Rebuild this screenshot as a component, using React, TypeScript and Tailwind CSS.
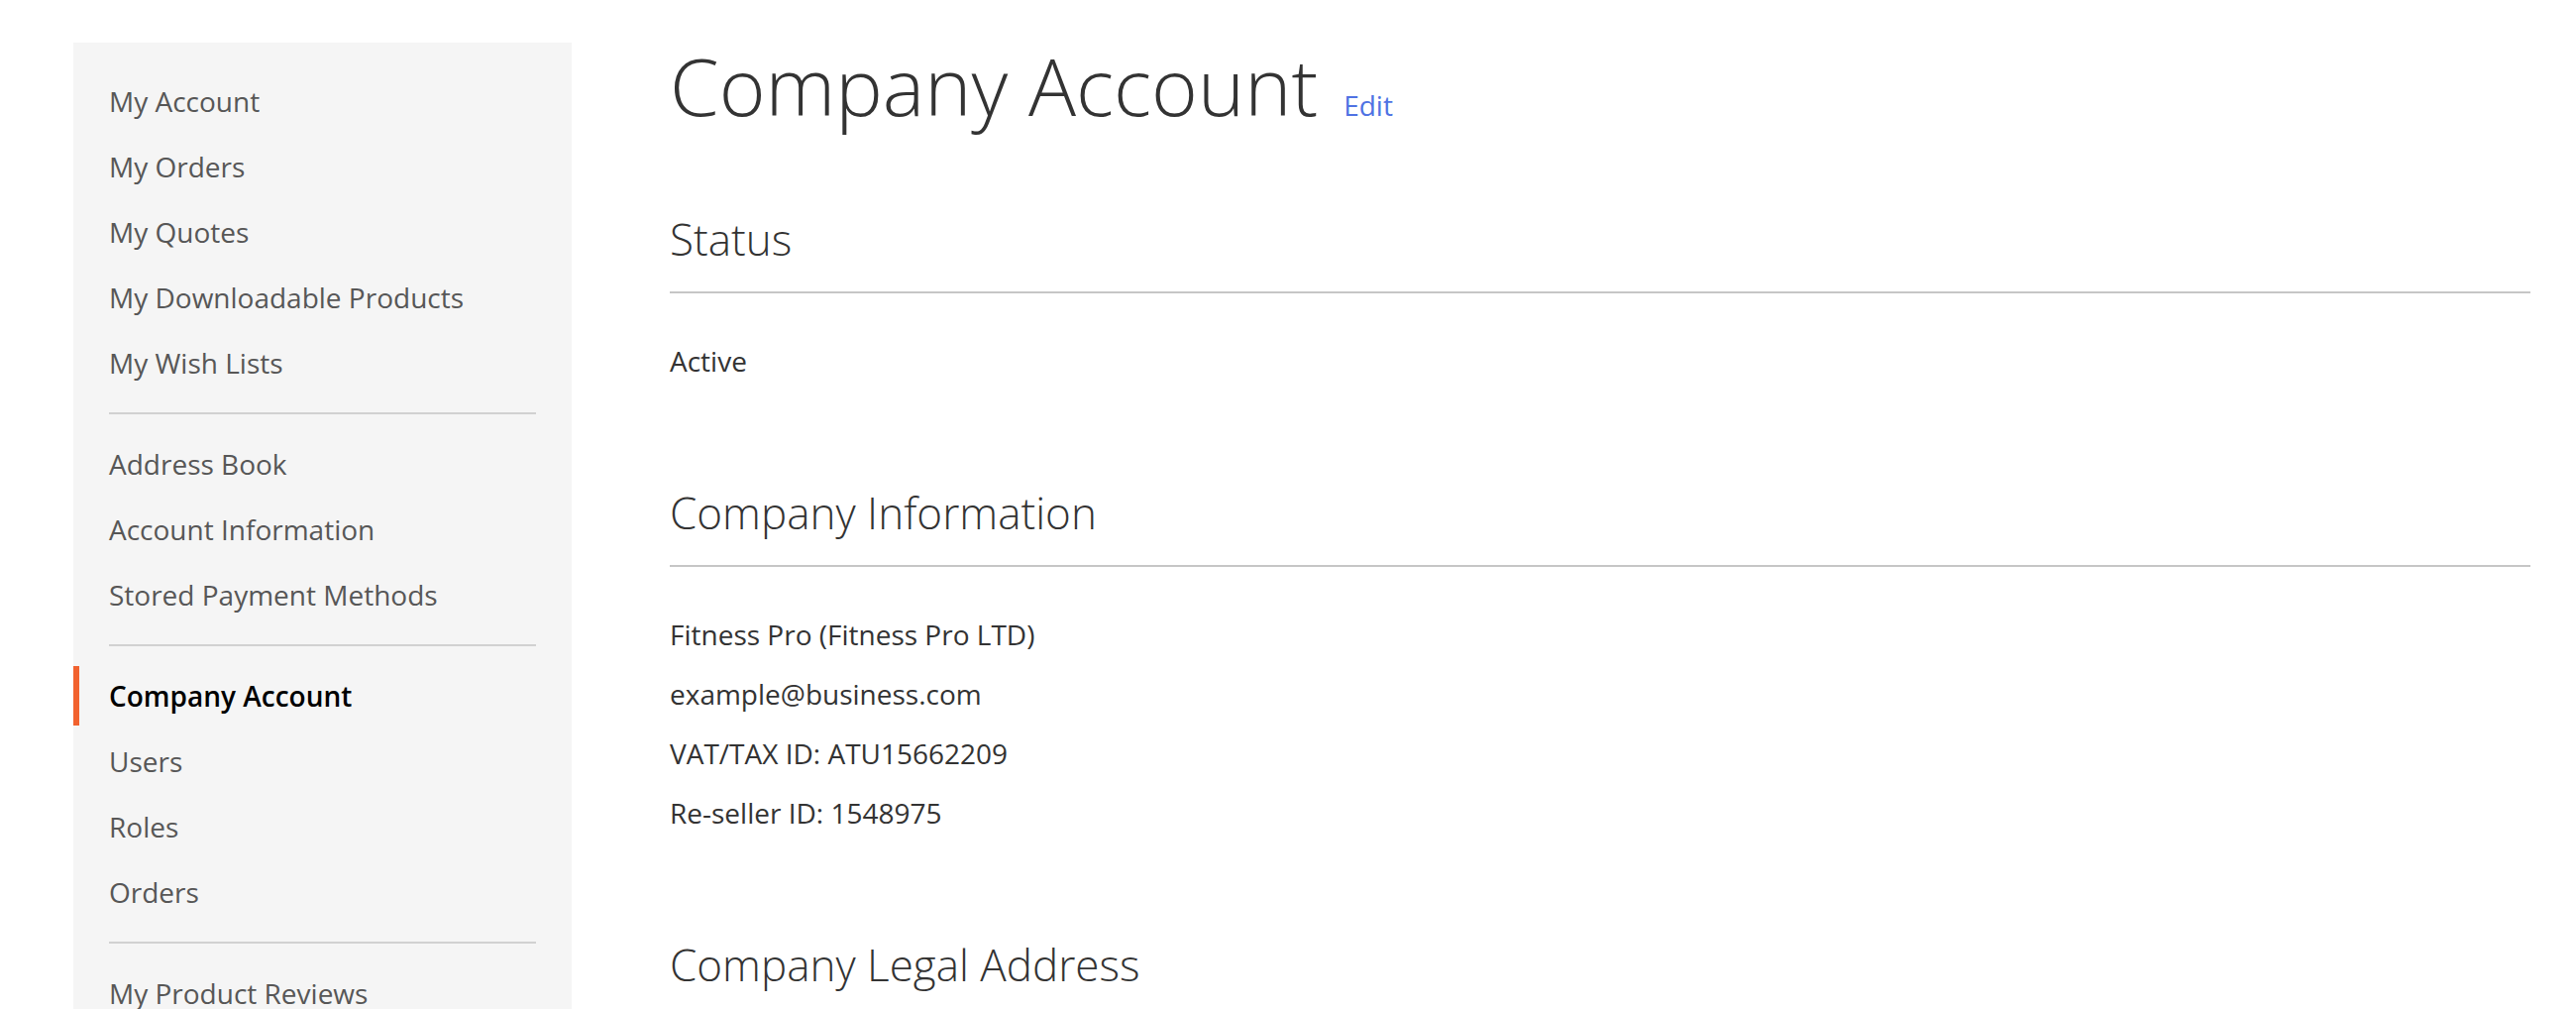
import React from "react";

type NavEntry = { label: string; current?: boolean } | "delim";

const nav: NavEntry[] = [
  { label: "My Account" },
  { label: "My Orders" },
  { label: "My Quotes" },
  { label: "My Downloadable Products" },
  { label: "My Wish Lists" },
  "delim",
  { label: "Address Book" },
  { label: "Account Information" },
  { label: "Stored Payment Methods" },
  "delim",
  { label: "Company Account", current: true },
  { label: "Users" },
  { label: "Roles" },
  { label: "Orders" },
  "delim",
  { label: "My Product Reviews" },
  { label: "Newsletter Subscriptions" },
];

function Sidebar() {
  return (
    <div className="w-[503px] shrink-0 bg-[#f5f5f5] pt-[23px] pb-[30px] self-start">
      <ul className="flex flex-col">
        {nav.map((n, i) =>
          n === "delim" ? (
            <li key={i} className="mt-[20px] mb-[14px] mx-[36px] border-t-2 border-[#d1d1d1]" />
          ) : (
            <li key={i} className="mt-[6px]">
              {n.current ? (
                <strong className="block border-l-[6px] border-[#f1622f] pl-[30px] pr-[36px] py-[10px] text-[28px] leading-[40px] font-semibold text-black">
                  {n.label}
                </strong>
              ) : (
                <a
                  href="#"
                  className="block border-l-[6px] border-transparent pl-[30px] pr-[36px] py-[10px] text-[28px] leading-[40px] text-[#575757]"
                >
                  {n.label}
                </a>
              )}
            </li>
          )
        )}
      </ul>
    </div>
  );
}

function Section({ title, lines }: { title: string; lines: string[] }) {
  return (
    <div className="mb-[107px]">
      <h2 className="border-b-2 border-[#c6c6c6] pb-[27px] text-[44px] leading-[52px] font-light text-[#333]">
        {title}
      </h2>
      <div className="mt-[48px] flex flex-col gap-[20px]">
        {lines.map((l) => (
          <div key={l} className="text-[28px] leading-[40px] text-[#333]">
            {l}
          </div>
        ))}
      </div>
    </div>
  );
}

export default function App() {
  return (
    <div
      className="min-h-screen bg-white flex pl-[74px] pr-[46px] pt-[43px]"
      style={{ fontFamily: '"Open Sans", "Liberation Sans", sans-serif' }}
    >
      <Sidebar />
      <main className="flex-1 ml-[99px] -mt-px">
        <div className="flex items-baseline mb-[85px]">
          <h1 className="text-[80px] leading-[88px] font-light text-[#333]">Company Account</h1>
          <a href="#" className="ml-[26px] text-[28px] leading-[40px] text-[#4f72e3]">
            Edit
          </a>
        </div>
        <Section title="Status" lines={["Active"]} />
        <Section
          title="Company Information"
          lines={[
            "Fitness Pro (Fitness Pro LTD)",
            "example@business.com",
            "VAT/TAX ID: ATU15662209",
            "Re-seller ID: 1548975",
          ]}
        />
        <Section title="Company Legal Address" lines={["Fitness Pro LTD", "Rua Campo Lindo, 39", "Curitiba, Paraná, 82590-020"]} />
      </main>
    </div>
  );
}
